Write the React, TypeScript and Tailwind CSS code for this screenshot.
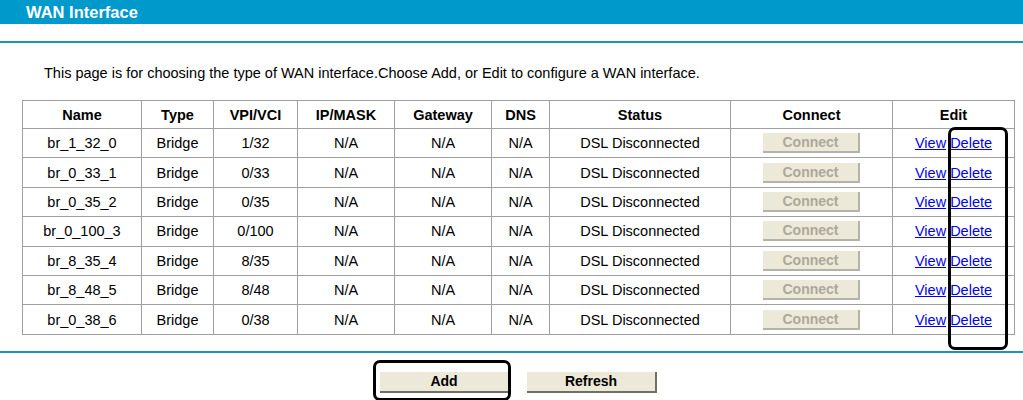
const ROWS = [
  { name: "br_1_32_0", vpi: "1/32" },
  { name: "br_0_33_1", vpi: "0/33" },
  { name: "br_0_35_2", vpi: "0/35" },
  { name: "br_0_100_3", vpi: "0/100" },
  { name: "br_8_35_4", vpi: "8/35" },
  { name: "br_8_48_5", vpi: "8/48" },
  { name: "br_0_38_6", vpi: "0/38" },
];

const HEADERS = ["Name", "Type", "VPI/VCI", "IP/MASK", "Gateway", "DNS", "Status", "Connect", "Edit"];
const WIDTHS = [119, 72, 84, 97, 97, 58, 181, 162, 122];

export default function App() {
  return (
    <div className="relative w-[1023px] h-[400px] overflow-hidden bg-white font-['Liberation_Sans',Arial,sans-serif] text-black">
      {/* title bar */}
      <div className="h-[24px] bg-[#0099cc] pl-[26px] text-[16.5px] leading-[24px] font-bold text-white">
        WAN Interface
      </div>
      <div className="mt-[17px] h-[2px] bg-[#1b93b9]" />

      <p className="mt-[22px] pl-[44px] text-[14.5px] leading-[16px]">
        This page is for choosing the type of WAN interface.Choose Add, or Edit to configure a WAN interface.
      </p>

      {/* table */}
      <div className="mt-[19px] pl-[22px]">
        <table className="table-fixed border-collapse text-[14.5px] leading-[16px]">
          <colgroup>
            {WIDTHS.map((w, i) => (
              <col key={i} style={{ width: w }} />
            ))}
          </colgroup>
          <thead>
            <tr className="h-[28px]">
              {HEADERS.map((h) => (
                <th key={h} className="border border-[#a0a0a0] font-bold text-center p-0">
                  {h}
                </th>
              ))}
            </tr>
          </thead>
          <tbody>
            {ROWS.map((r) => (
              <tr key={r.name} className="h-[29.4px]">
                <td className="border border-[#a0a0a0] text-center p-0">{r.name}</td>
                <td className="border border-[#a0a0a0] text-center p-0">Bridge</td>
                <td className="border border-[#a0a0a0] text-center p-0">{r.vpi}</td>
                <td className="border border-[#a0a0a0] text-center p-0">N/A</td>
                <td className="border border-[#a0a0a0] text-center p-0">N/A</td>
                <td className="border border-[#a0a0a0] text-center p-0">N/A</td>
                <td className="border border-[#a0a0a0] text-center p-0">DSL Disconnected</td>
                <td className="border border-[#a0a0a0] text-center p-0">
                  <button
                    disabled
                    className="w-[97px] h-[20px] bg-[#ece9d8] border-r-2 border-b-2 border-[#b5b3a8] text-[14px] font-bold text-[#aca899] align-middle"
                  >
                    Connect
                  </button>
                </td>
                <td className="border border-[#a0a0a0] text-center p-0">
                  <a href="#" className="text-[#0000ee] underline">View</a>{" "}
                  <a href="#" className="text-[#0000ee] underline">Delete</a>
                </td>
              </tr>
            ))}
          </tbody>
        </table>
      </div>

      <div className="mt-[16px] h-[2px] bg-[#1b93b9]" />

      {/* buttons */}
      <div className="mt-[19px] flex pl-[380px] gap-[17px]">
        <button className="w-[130px] h-[21px] bg-[#ece9d8] border-r-2 border-b-2 border-[#716f64] text-[14px] font-bold leading-[18px]">
          Add
        </button>
        <button className="w-[130px] h-[21px] bg-[#ece9d8] border-r-2 border-b-2 border-[#716f64] text-[14px] font-bold leading-[18px]">
          Refresh
        </button>
      </div>

      {/* annotation boxes */}
      <div className="absolute left-[948px] top-[127px] w-[60px] h-[223px] border-[3px] border-black rounded-[7px]" />
      <div className="absolute left-[373px] top-[360px] w-[138px] h-[41px] border-[3px] border-black rounded-[7px]" />
    </div>
  );
}
